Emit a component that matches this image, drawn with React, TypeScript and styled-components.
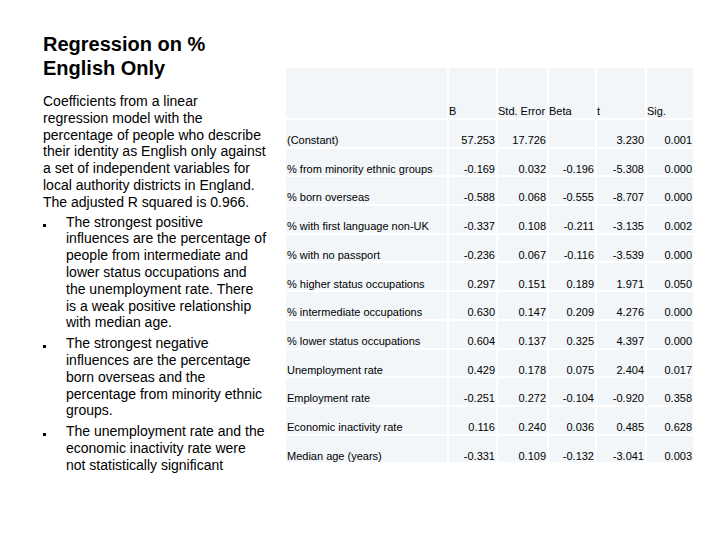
import React from 'react';
import styled, { createGlobalStyle } from 'styled-components';

const GlobalStyle = createGlobalStyle`
  html, body {
    margin: 0;
    padding: 0;
    background: #ffffff;
  }
  body {
    font-family: "Liberation Sans", Arial, sans-serif;
    color: #000000;
  }
`;

const Slide = styled.div`
  width: 720px;
  height: 540px;
  display: flex;
  align-items: flex-start;
  padding: 32px 0 0 43px;
  box-sizing: border-box;
`;

const TextColumn = styled.div`
  width: 230px;
  flex-shrink: 0;
`;

const Title = styled.h1`
  margin: 0;
  font-size: 20px;
  line-height: 24px;
  font-weight: 700;
`;

const Intro = styled.p`
  margin: 13px 0 0;
  font-size: 14px;
  line-height: 16.8px;
  white-space: nowrap;
`;

const Points = styled.ul`
  list-style: none;
  margin: 3px 0 0;
  padding: 0;
  display: flex;
  flex-direction: column;
  gap: 4px;
`;

const Point = styled.li`
  display: flex;
  font-size: 14px;
  line-height: 16.8px;
  white-space: nowrap;
`;

const Bullet = styled.span`
  width: 23px;
  flex-shrink: 0;

  &::before {
    content: '';
    display: block;
    width: 3px;
    height: 3px;
    margin-top: 10px;
    background: #000000;
  }
`;

const Table = styled.div`
  margin: 36px 0 0 13px;
  display: grid;
  grid-template-columns: 161px 47px 49px 46px 48px 46px;
  grid-template-rows: 50px;
  grid-auto-rows: 26.7px;
  gap: 2px;
  font-size: 11px;
  line-height: 12.6px;
`;

const Cell = styled.div<{ $align?: 'left' | 'right' }>`
  background: #f2f6f9;
  display: flex;
  align-items: flex-end;
  justify-content: ${(p) => (p.$align === 'right' ? 'flex-end' : 'flex-start')};
  padding: ${(p) => (p.$align === 'right' ? '0 1px 0 0' : '0 0 0 1px')};
  white-space: nowrap;
`;

const HeadCell = styled(Cell)`
  padding: 0;
`;

const intro = [
  'Coefficients from a linear',
  'regression model with the',
  'percentage of people who describe',
  'their identity as English only against',
  'a set of independent variables for',
  'local authority districts in England.',
  'The adjusted R squared is 0.966.',
];

const points = [
  [
    'The strongest positive',
    'influences are the percentage of',
    'people from intermediate and',
    'lower status occupations and',
    'the unemployment rate. There',
    'is a weak positive relationship',
    'with median age.',
  ],
  [
    'The strongest negative',
    'influences are the percentage',
    'born overseas and the',
    'percentage from minority ethnic',
    'groups.',
  ],
  [
    'The unemployment rate and the',
    'economic inactivity rate were',
    'not statistically significant',
  ],
];

const headers = ['', 'B', 'Std. Error', 'Beta', 't', 'Sig.'];

const rows: string[][] = [
  ['(Constant)', '57.253', '17.726', '', '3.230', '0.001'],
  ['% from minority ethnic groups', '-0.169', '0.032', '-0.196', '-5.308', '0.000'],
  ['% born overseas', '-0.588', '0.068', '-0.555', '-8.707', '0.000'],
  ['% with first language non-UK', '-0.337', '0.108', '-0.211', '-3.135', '0.002'],
  ['% with no passport', '-0.236', '0.067', '-0.116', '-3.539', '0.000'],
  ['% higher status occupations', '0.297', '0.151', '0.189', '1.971', '0.050'],
  ['% intermediate occupations', '0.630', '0.147', '0.209', '4.276', '0.000'],
  ['% lower status occupations', '0.604', '0.137', '0.325', '4.397', '0.000'],
  ['Unemployment rate', '0.429', '0.178', '0.075', '2.404', '0.017'],
  ['Employment rate', '-0.251', '0.272', '-0.104', '-0.920', '0.358'],
  ['Economic inactivity rate', '0.116', '0.240', '0.036', '0.485', '0.628'],
  ['Median age (years)', '-0.331', '0.109', '-0.132', '-3.041', '0.003'],
];

const withBreaks = (lines: string[]) =>
  lines.map((line, i) => (
    <React.Fragment key={i}>
      {i > 0 && <br />}
      {line}
    </React.Fragment>
  ));

const App: React.FC = () => {
  return (
    <>
      <GlobalStyle />
      <Slide>
        <TextColumn>
          <Title>
            Regression on %
            <br />
            English Only
          </Title>
          <Intro>{withBreaks(intro)}</Intro>
          <Points>
            {points.map((lines, i) => (
              <Point key={i}>
                <Bullet />
                <span>{withBreaks(lines)}</span>
              </Point>
            ))}
          </Points>
        </TextColumn>

        <Table>
          {headers.map((h, i) => (
            <HeadCell key={`h${i}`}>{h}</HeadCell>
          ))}
          {rows.map((row, r) =>
            row.map((value, c) => (
              <Cell key={`${r}-${c}`} $align={c === 0 ? 'left' : 'right'}>
                {value}
              </Cell>
            ))
          )}
        </Table>
      </Slide>
    </>
  );
};

export default App;
